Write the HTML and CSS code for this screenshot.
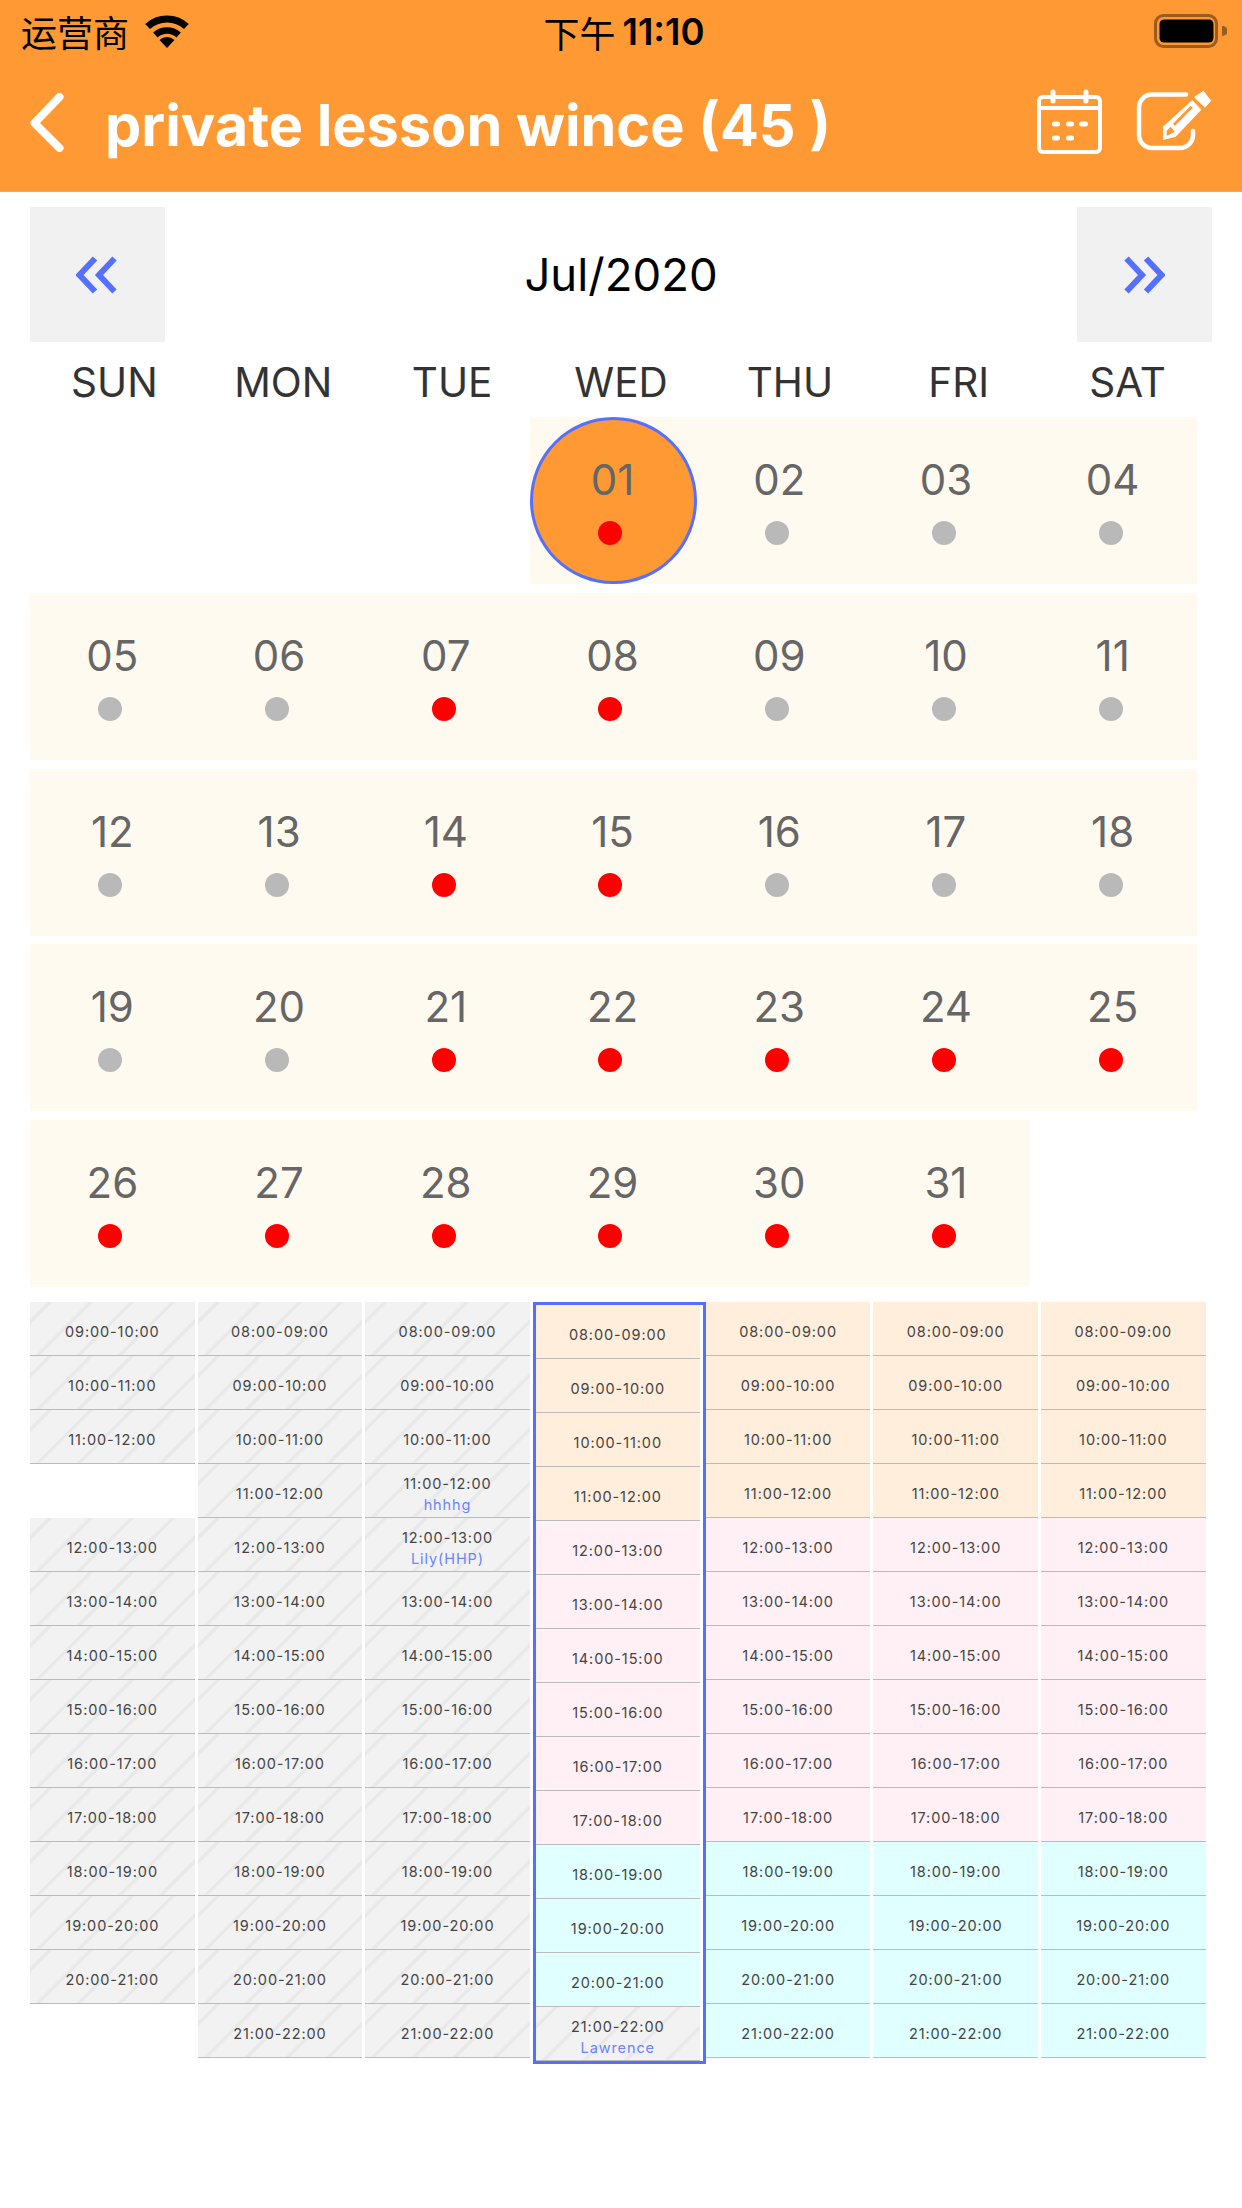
FILE: index.html
```html
<!DOCTYPE html>
<html lang="en">
<head>
<meta charset="utf-8">
<title>private lesson wince</title>
<link rel="stylesheet" href="styles.css">
</head>
<body>
<header class="top">
  <div class="status">
    <div class="status-left">
      <span class="carrier">运营商</span>
      <svg class="wifi" width="46" height="33" viewBox="0 0 46 33"><path d="M3.6 11.5A29 29 0 0 1 42.4 11.5" fill="none" stroke="#000" stroke-width="7"/><path d="M11.3 20A17.5 17.5 0 0 1 34.7 20" fill="none" stroke="#000" stroke-width="6.5"/><path d="M23 33L15.5 25A11 11 0 0 1 30.5 25Z" fill="#000"/></svg>
    </div>
    <div class="clock"><span class="clock-cjk">下午</span> <span class="clock-num">11:10</span></div>
    <div class="status-right">
      <svg width="73" height="34" viewBox="0 0 73 34"><rect x="1.5" y="1.5" width="61" height="31" rx="8" fill="none" stroke="#9a5d1f" stroke-width="3"/><rect x="5.5" y="5.5" width="54" height="23" rx="4.5" fill="#000"/><path d="M68 12a6 5 0 0 1 0 10Z" fill="#9a5d1f"/></svg>
    </div>
  </div>
  <div class="nav">
    <svg class="back" width="34" height="59" viewBox="0 0 34 59"><polyline points="29.5,4 4.5,30 29.5,55" fill="none" stroke="#fff" stroke-width="8" stroke-linecap="round" stroke-linejoin="round"/></svg>
    <h1 class="title">private lesson wince (45 )</h1>
    <div class="actions">
      <svg width="66" height="66" viewBox="0 0 66 66"><rect x="2" y="8" width="61" height="55" rx="4" fill="none" stroke="#fff" stroke-width="4"/><path d="M2 19H63" stroke="#fff" stroke-width="4"/><path d="M16 3V12M49 3V12" stroke="#fff" stroke-width="5" stroke-linecap="round"/><path d="M17.5 35H20.5M31.5 35H34.5M44.5 35H48.5M17.5 49H20.5M31.5 49H34.5" stroke="#fff" stroke-width="5" stroke-linecap="round"/></svg>
      <svg width="76" height="62" viewBox="0 0 76 62"><path d="M50 3.5H16A13 13 0 0 0 3 16.500V44A13 13 0 0 0 16 57H44A13 13 0 0 0 57 44V40" fill="none" stroke="#fff" stroke-width="4.5" stroke-linecap="round"/><path d="M67.300 .3L74.700 9.700L69 16.300L58.700 6.300Z" fill="#fff" stroke="#fff" stroke-linejoin="round"/><path d="M56.300 9L65.300 18.700L39.700 45.700L27 49L27 35.700Z" fill="#fff"/><path d="M38 33.700L55.700 15.700" stroke="#ff9933" stroke-width="3"/><path d="M30.700 39.700L34.700 35.700L38.700 40.700L34.700 43L30.700 44.700Z" fill="#ff9933"/></svg>
    </div>
  </div>
</header>

<section class="month">
  <div class="month-btn"><svg class="prev-icon" width="42" height="38" viewBox="0 0 42 38"><path d="M19 2.500L3.500 19L19 35.500M38.500 2.500L23 19L38.500 35.500" fill="none" stroke="#5570ff" stroke-width="6"/></svg></div>
  <div class="month-name">Jul/2020</div>
  <div class="month-btn"><svg width="42" height="38" viewBox="0 0 42 38"><path d="M23 2.500L38.500 19L23 35.500M3.500 2.500L19 19L3.500 35.500" fill="none" stroke="#5570ff" stroke-width="6"/></svg></div>
</section>

<div class="weekdays">
  <div>SUN</div><div>MON</div><div>TUE</div><div>WED</div><div>THU</div><div>FRI</div><div>SAT</div>
</div>

<section class="calendar">
  <div></div><div></div><div></div>
  <div class="day"><div class="face selected"><div class="num">01</div><i class="dot busy"></i></div></div>
  <div class="day"><div class="face"><div class="num">02</div><i class="dot"></i></div></div>
  <div class="day"><div class="face"><div class="num">03</div><i class="dot"></i></div></div>
  <div class="day"><div class="face"><div class="num">04</div><i class="dot"></i></div></div>

  <div class="day"><div class="face"><div class="num">05</div><i class="dot"></i></div></div>
  <div class="day"><div class="face"><div class="num">06</div><i class="dot"></i></div></div>
  <div class="day"><div class="face"><div class="num">07</div><i class="dot busy"></i></div></div>
  <div class="day"><div class="face"><div class="num">08</div><i class="dot busy"></i></div></div>
  <div class="day"><div class="face"><div class="num">09</div><i class="dot"></i></div></div>
  <div class="day"><div class="face"><div class="num">10</div><i class="dot"></i></div></div>
  <div class="day"><div class="face"><div class="num">11</div><i class="dot"></i></div></div>

  <div class="day"><div class="face"><div class="num">12</div><i class="dot"></i></div></div>
  <div class="day"><div class="face"><div class="num">13</div><i class="dot"></i></div></div>
  <div class="day"><div class="face"><div class="num">14</div><i class="dot busy"></i></div></div>
  <div class="day"><div class="face"><div class="num">15</div><i class="dot busy"></i></div></div>
  <div class="day"><div class="face"><div class="num">16</div><i class="dot"></i></div></div>
  <div class="day"><div class="face"><div class="num">17</div><i class="dot"></i></div></div>
  <div class="day"><div class="face"><div class="num">18</div><i class="dot"></i></div></div>

  <div class="day"><div class="face"><div class="num">19</div><i class="dot"></i></div></div>
  <div class="day"><div class="face"><div class="num">20</div><i class="dot"></i></div></div>
  <div class="day"><div class="face"><div class="num">21</div><i class="dot busy"></i></div></div>
  <div class="day"><div class="face"><div class="num">22</div><i class="dot busy"></i></div></div>
  <div class="day"><div class="face"><div class="num">23</div><i class="dot busy"></i></div></div>
  <div class="day"><div class="face"><div class="num">24</div><i class="dot busy"></i></div></div>
  <div class="day"><div class="face"><div class="num">25</div><i class="dot busy"></i></div></div>

  <div class="day"><div class="face"><div class="num">26</div><i class="dot busy"></i></div></div>
  <div class="day"><div class="face"><div class="num">27</div><i class="dot busy"></i></div></div>
  <div class="day"><div class="face"><div class="num">28</div><i class="dot busy"></i></div></div>
  <div class="day"><div class="face"><div class="num">29</div><i class="dot busy"></i></div></div>
  <div class="day"><div class="face"><div class="num">30</div><i class="dot busy"></i></div></div>
  <div class="day"><div class="face"><div class="num">31</div><i class="dot busy"></i></div></div>
</section>

<section class="slots">
  <div class="col">
    <div class="slot off">09:00-10:00</div>
    <div class="slot off">10:00-11:00</div>
    <div class="slot off">11:00-12:00</div>
    <div class="slot none"></div>
    <div class="slot off">12:00-13:00</div>
    <div class="slot off">13:00-14:00</div>
    <div class="slot off">14:00-15:00</div>
    <div class="slot off">15:00-16:00</div>
    <div class="slot off">16:00-17:00</div>
    <div class="slot off">17:00-18:00</div>
    <div class="slot off">18:00-19:00</div>
    <div class="slot off">19:00-20:00</div>
    <div class="slot off">20:00-21:00</div>
  </div>
  <div class="col">
    <div class="slot off">08:00-09:00</div>
    <div class="slot off">09:00-10:00</div>
    <div class="slot off">10:00-11:00</div>
    <div class="slot off">11:00-12:00</div>
    <div class="slot off">12:00-13:00</div>
    <div class="slot off">13:00-14:00</div>
    <div class="slot off">14:00-15:00</div>
    <div class="slot off">15:00-16:00</div>
    <div class="slot off">16:00-17:00</div>
    <div class="slot off">17:00-18:00</div>
    <div class="slot off">18:00-19:00</div>
    <div class="slot off">19:00-20:00</div>
    <div class="slot off">20:00-21:00</div>
    <div class="slot off">21:00-22:00</div>
  </div>
  <div class="col">
    <div class="slot off">08:00-09:00</div>
    <div class="slot off">09:00-10:00</div>
    <div class="slot off">10:00-11:00</div>
    <div class="slot off booked">11:00-12:00<span class="who">hhhhg</span></div>
    <div class="slot off booked">12:00-13:00<span class="who">Lily(HHP)</span></div>
    <div class="slot off">13:00-14:00</div>
    <div class="slot off">14:00-15:00</div>
    <div class="slot off">15:00-16:00</div>
    <div class="slot off">16:00-17:00</div>
    <div class="slot off">17:00-18:00</div>
    <div class="slot off">18:00-19:00</div>
    <div class="slot off">19:00-20:00</div>
    <div class="slot off">20:00-21:00</div>
    <div class="slot off">21:00-22:00</div>
  </div>
  <div class="col today">
    <div class="slot am">08:00-09:00</div>
    <div class="slot am">09:00-10:00</div>
    <div class="slot am">10:00-11:00</div>
    <div class="slot am">11:00-12:00</div>
    <div class="slot pm">12:00-13:00</div>
    <div class="slot pm">13:00-14:00</div>
    <div class="slot pm">14:00-15:00</div>
    <div class="slot pm">15:00-16:00</div>
    <div class="slot pm">16:00-17:00</div>
    <div class="slot pm">17:00-18:00</div>
    <div class="slot eve">18:00-19:00</div>
    <div class="slot eve">19:00-20:00</div>
    <div class="slot eve">20:00-21:00</div>
    <div class="slot off booked">21:00-22:00<span class="who">Lawrence</span></div>
  </div>
  <div class="col">
    <div class="slot am">08:00-09:00</div>
    <div class="slot am">09:00-10:00</div>
    <div class="slot am">10:00-11:00</div>
    <div class="slot am">11:00-12:00</div>
    <div class="slot pm">12:00-13:00</div>
    <div class="slot pm">13:00-14:00</div>
    <div class="slot pm">14:00-15:00</div>
    <div class="slot pm">15:00-16:00</div>
    <div class="slot pm">16:00-17:00</div>
    <div class="slot pm">17:00-18:00</div>
    <div class="slot eve">18:00-19:00</div>
    <div class="slot eve">19:00-20:00</div>
    <div class="slot eve">20:00-21:00</div>
    <div class="slot eve">21:00-22:00</div>
  </div>
  <div class="col">
    <div class="slot am">08:00-09:00</div>
    <div class="slot am">09:00-10:00</div>
    <div class="slot am">10:00-11:00</div>
    <div class="slot am">11:00-12:00</div>
    <div class="slot pm">12:00-13:00</div>
    <div class="slot pm">13:00-14:00</div>
    <div class="slot pm">14:00-15:00</div>
    <div class="slot pm">15:00-16:00</div>
    <div class="slot pm">16:00-17:00</div>
    <div class="slot pm">17:00-18:00</div>
    <div class="slot eve">18:00-19:00</div>
    <div class="slot eve">19:00-20:00</div>
    <div class="slot eve">20:00-21:00</div>
    <div class="slot eve">21:00-22:00</div>
  </div>
  <div class="col">
    <div class="slot am">08:00-09:00</div>
    <div class="slot am">09:00-10:00</div>
    <div class="slot am">10:00-11:00</div>
    <div class="slot am">11:00-12:00</div>
    <div class="slot pm">12:00-13:00</div>
    <div class="slot pm">13:00-14:00</div>
    <div class="slot pm">14:00-15:00</div>
    <div class="slot pm">15:00-16:00</div>
    <div class="slot pm">16:00-17:00</div>
    <div class="slot pm">17:00-18:00</div>
    <div class="slot eve">18:00-19:00</div>
    <div class="slot eve">19:00-20:00</div>
    <div class="slot eve">20:00-21:00</div>
    <div class="slot eve">21:00-22:00</div>
  </div>
</section>
</body>
</html>
```
FILE: styles.css
```css
* { box-sizing: border-box; }
html, body { margin: 0; padding: 0; background: #fff; }
body { width: 1242px; height: 2208px; overflow: hidden; font-family: Inter, "Noto Sans CJK SC", sans-serif; color: #333; }

.top { height: 192px; background: #ff9933; border-bottom: 1px solid #b4b4b4; }
.status { height: 60px; display: grid; grid-template-columns: 1fr auto 1fr; align-items: center; padding: 0 15px 0 21px; color: #000; }
.status-left { display: flex; align-items: center; gap: 15px; }
.carrier { font-size: 36px; line-height: 60px; font-family: "Noto Sans CJK SC", sans-serif; font-weight: 400; }
.clock { font-size: 36.500px; line-height: 60px; display: flex; gap: 7px; padding-top: 2px; }
.clock-cjk { font-family: "Noto Sans CJK SC", sans-serif; font-weight: 400; font-size: 36px; }
.clock-num { font-weight: 600; }
.status-right { display: flex; justify-content: flex-end; }

.nav { height: 131px; display: flex; align-items: center; padding: 0 30px; }
.back { flex: none; margin-top: -6px; }
.title { margin: -2px 0 0 41px; font-size: 57.600px; font-weight: 700; color: #fff; line-height: 70px; white-space: nowrap; }
.actions { margin-left: auto; display: flex; align-items: center; gap: 33px; margin-top: -8px; }

.month { margin: 15px 30px 0; height: 135px; display: flex; justify-content: space-between; align-items: center; }
.month-btn { width: 135px; height: 135px; background: #f1f1f1; display: flex; align-items: center; justify-content: center; }
.prev-icon { margin-left: -2px; }
.month-name { font-size: 45.500px; color: #000; }

.weekdays { height: 75px; margin: 0 30px 0 30px; display: grid; grid-template-columns: repeat(7, 1fr); align-items: center; text-align: center; font-size: 40.500px; color: #333; padding-top: 5px; }

.calendar { margin: 0 45px 0 30px; display: grid; grid-template-columns: repeat(7, 1fr); grid-auto-rows: 167px; row-gap: 8.750px; }
.day { background: #fffaf0; }
.face { height: 100%; display: flex; flex-direction: column; align-items: center; }
.face.selected { background: #ff9933; border: 3px solid #5570ff; border-radius: 50%; }
.num { font-size: 42px; line-height: 50px; margin-top: 38px; color: #666; margin-right: 2px; }
.selected .num { margin-top: 35px; }
.dot { display: block; width: 24px; height: 24px; border-radius: 50%; background: #b9b9b9; margin: 16px 6px 0 0; }
.dot.busy { background: #f00; }

.slots { margin: 15px 0 0 30px; display: flex; align-items: flex-start; gap: 3px; }
.col { width: 164.600px; flex: none; }
.col.today { width: 173px; margin-right: -3px; border: 3px solid #5570ff; padding-right: 3px; background: #fff; }
.slot { height: 54px; border-bottom: 1px solid #bbb; display: flex; flex-direction: column; align-items: center; justify-content: center; padding-top: 6px; font-size: 14.500px; letter-spacing: .9px; line-height: 22px; color: #444; }
.off { background: repeating-linear-gradient(135deg, #f2f2f2 0, #f2f2f2 12.500px, #e9e9e9 12.500px, #e9e9e9 16px, #f2f2f2 16px, #f2f2f2 29px); }
.none { background: #fff; border-bottom: 0; }
.am { background: #ffeedc; }
.pm { background: #fff0f5; }
.eve { background: #e0ffff; }
.booked { padding-top: 6px; line-height: 21px; }
.who { color: #6b84ff; }
```
